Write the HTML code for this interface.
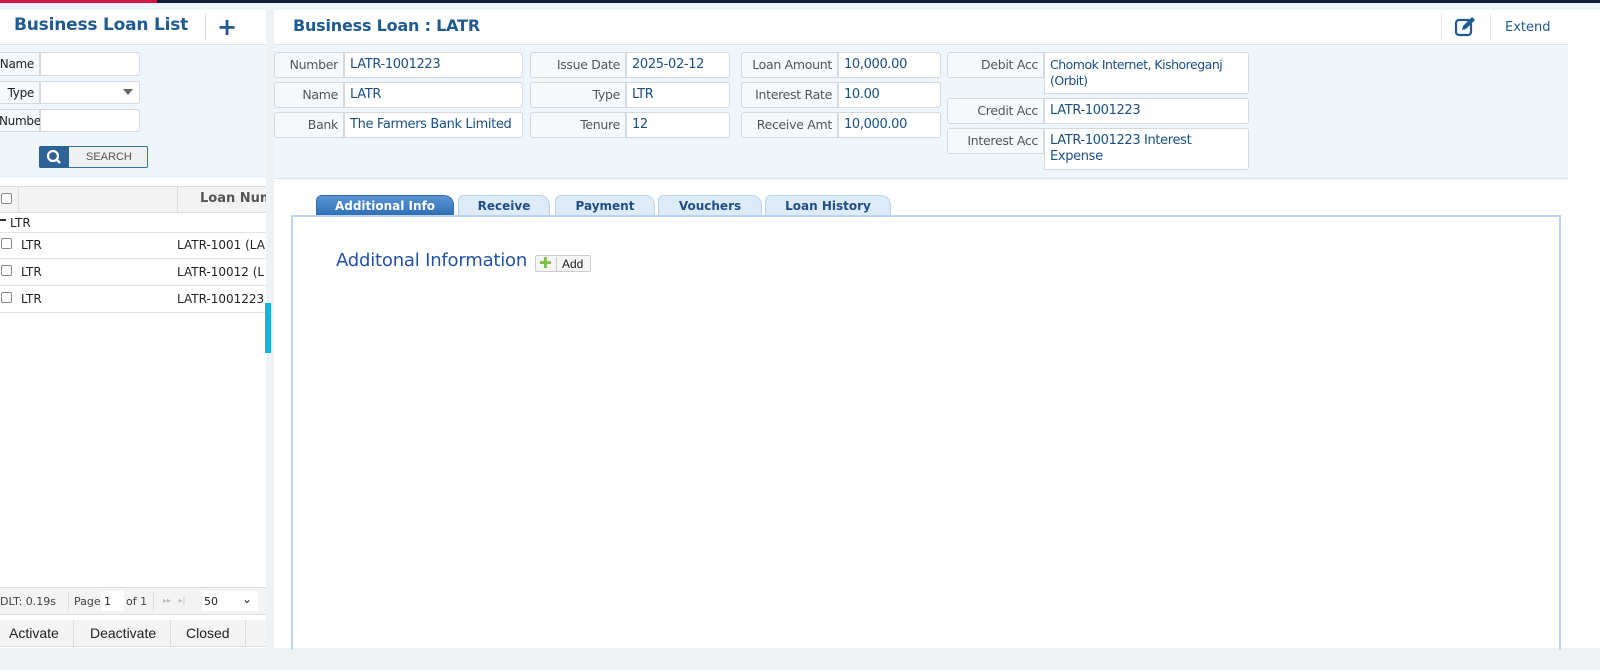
<!DOCTYPE html>
<html><head><meta charset="utf-8"><style>
*{box-sizing:border-box;margin:0;padding:0}
body{width:1600px;height:670px;overflow:hidden;background:#fff;font-family:"DejaVu Sans","Liberation Sans",sans-serif;font-size:13px;position:relative;color:#222}
.a{position:absolute}
.lbl{position:absolute;background:#f6f9fc;border:1px solid #d3d9df;border-radius:3px 0 0 3px;text-align:right;padding:4px 5px 0 0;color:#555;font-size:12.5px;letter-spacing:-0.3px}
.val{position:absolute;background:#fff;border:1px solid #d3d9df;border-radius:0 3px 3px 0;padding:4px 5px 0;color:#1a4f86;font-size:13px;line-height:16px;letter-spacing:-0.35px}
.tab{position:absolute;top:195px;height:21px;border:1px solid #b9d3ea;border-bottom:none;border-radius:6px 10px 0 0;background:#dcebf7;color:#1f4f86;font-weight:bold;font-size:12px;text-align:center;line-height:21px}
.row{position:absolute;left:0;width:266px;height:27px;border-bottom:1px solid #e2e2e2;font-size:12px;line-height:26px}
.cb{position:absolute;left:1px;top:6px;width:11px;height:11px;border:1px solid #888;border-radius:2px;background:#fff}
</style></head><body>
<div class="a" style="left:0;top:0;width:157px;height:3px;background:#d6163f"></div>
<div class="a" style="left:157px;top:0;width:1443px;height:3px;background:#0e1e3a"></div>
<div class="a" style="left:0;top:3px;width:1600px;height:7px;background:#eef5f8"></div>
<div class="a" style="left:0;top:648px;width:1600px;height:22px;background:#eef2f3"></div>
<!-- left panel -->
<div class="a" style="left:0;top:10px;width:266px;height:35px;background:#fff;border-bottom:1px solid #dde3e8"></div>
<div class="a" style="left:14px;top:15px;font-size:17px;font-weight:bold;color:#1f5a90;letter-spacing:-0.2px">Business Loan List</div>
<div class="a" style="left:205px;top:13px;width:1px;height:27px;background:#ddd"></div>
<div class="a" style="left:217px;top:18px;font-size:24px;font-weight:bold;color:#1f5a90;line-height:18px">+</div>
<div class="a" style="left:0;top:45px;width:266px;height:133px;background:#eef6fc"></div>
<div class="lbl" style="left:-2px;top:52px;width:42px;height:24px;font-size:12px;color:#222">Name</div><div class="val" style="left:40px;top:52px;width:100px;height:24px"></div>
<div class="lbl" style="left:-2px;top:81px;width:42px;height:23px;font-size:12px;color:#222">Type</div><div class="val" style="left:40px;top:81px;width:100px;height:23px"><span style="position:absolute;right:6px;top:7px;border:5px solid transparent;border-top:6px solid #666"></span></div>
<div class="lbl" style="left:-2px;top:109px;width:42px;height:23px;font-size:12px;color:#222;padding-right:0">Numbe</div><div class="val" style="left:40px;top:109px;width:100px;height:23px"></div>
<div class="a" style="left:39px;top:146px;width:109px;height:22px;border:1px solid #3a6fa5;border-radius:2px;background:#eef0f2"></div>
<div class="a" style="left:39px;top:146px;width:30px;height:22px;background:#2d6296;border-radius:2px 0 0 2px"><svg width="30" height="22"><circle cx="14" cy="10" r="5" fill="none" stroke="#fff" stroke-width="2.2"/><line x1="18" y1="14" x2="21" y2="17" stroke="#fff" stroke-width="2.5"/></svg></div>
<div class="a" style="left:86px;top:151px;font-size:11px;color:#555;font-family:'Liberation Sans'">SEARCH</div>
<div class="a" style="left:0;top:186px;width:266px;height:27px;background:#f3f3f3;border-top:1px solid #ddd;border-bottom:1px solid #ddd"></div>
<div class="cb" style="top:193px"></div>
<div class="a" style="left:18px;top:186px;width:1px;height:27px;background:#ddd"></div>
<div class="a" style="left:177px;top:186px;width:1px;height:27px;background:#ddd"></div>
<div class="a" style="left:200px;top:191px;font-weight:bold;color:#555;font-size:13px">Loan Num</div>
<div class="row" style="top:213px;height:20px;line-height:20px;padding-left:10px"><span class="a" style="left:0;top:6px;width:6px;height:2px;background:#333"></span>LTR</div>
<div class="row" style="top:232px"><span class="cb"></span><span class="a" style="left:21px">LTR</span><span class="a" style="left:177px">LATR-1001 (LA</span></div>
<div class="row" style="top:259px"><span class="cb"></span><span class="a" style="left:21px">LTR</span><span class="a" style="left:177px">LATR-10012 (L</span></div>
<div class="row" style="top:286px"><span class="cb"></span><span class="a" style="left:21px">LTR</span><span class="a" style="left:177px">LATR-1001223</span></div>
<div class="a" style="left:266px;top:10px;width:8px;height:638px;background:#eef2f5"></div>
<div class="a" style="left:265px;top:303px;width:6px;height:50px;background:#17b3d8"></div>
<div class="a" style="left:0;top:587px;width:266px;height:28px;background:#f3f3f3;border-top:1px solid #ddd;border-bottom:1px solid #ddd;font-size:11px;color:#444"></div>
<div class="a" style="left:0;top:595px;font-size:11px;color:#444">DLT: 0.19s</div>
<div class="a" style="left:68px;top:591px;width:1px;height:20px;background:#ddd"></div>
<div class="a" style="left:74px;top:595px;font-size:11px;color:#444">Page</div>
<div class="a" style="left:102px;top:591px;width:22px;height:20px;background:#fff;font-size:11px;padding:4px 0 0 2px">1</div>
<div class="a" style="left:126px;top:595px;font-size:11px;color:#444">of 1</div>
<div class="a" style="left:153px;top:591px;width:1px;height:20px;background:#ddd"></div>
<div class="a" style="left:163px;top:596px;font-size:8px;color:#bbb">▸▸ &nbsp; ▸|</div>
<div class="a" style="left:202px;top:591px;width:56px;height:20px;background:#fff;font-size:11px;padding:4px 0 0 2px">50<span style="position:absolute;right:6px;top:1px;font-size:12px">⌄</span></div>
<div class="a" style="left:0;top:620px;width:266px;height:27px;background:#f4f4f4;border-bottom:1px solid #ddd;font-family:'Liberation Sans';font-size:14px;line-height:27px">
<span class="a" style="left:9px">Activate</span><span class="a" style="left:73px;width:1px;height:27px;background:#ddd"></span>
<span class="a" style="left:90px">Deactivate</span><span class="a" style="left:170px;width:1px;height:27px;background:#ddd"></span>
<span class="a" style="left:186px">Closed</span><span class="a" style="left:245px;width:1px;height:27px;background:#ddd"></span></div>
<!-- right panel -->
<div class="a" style="left:274px;top:10px;width:1294px;height:35px;background:#fff;border-bottom:1px solid #dde3e8"></div>
<div class="a" style="left:293px;top:16px;font-size:16px;font-weight:bold;color:#1f5a90;letter-spacing:-0.2px">Business Loan : LATR</div>
<div class="a" style="left:1441px;top:14px;width:1px;height:26px;background:#e2e2e2"></div>
<div class="a" style="left:1490px;top:14px;width:1px;height:26px;background:#e2e2e2"></div>
<svg class="a" style="left:1454px;top:16px" width="24" height="22"><rect x="2" y="4" width="15" height="15" rx="3" fill="none" stroke="#1f5a90" stroke-width="2.2"/><path d="M8 14 L9 10 L18 1 L21 4 L12 13 Z" fill="#1f5a90"/></svg>
<div class="a" style="left:1505px;top:20px;font-size:13px;color:#1f5a90">Extend</div>
<div class="a" style="left:274px;top:45px;width:1294px;height:134px;background:#eef6fc;border-bottom:1px solid #dde3e8"></div>
<div class="lbl" style="left:274px;top:52px;width:70px;height:26px">Number</div><div class="val" style="left:344px;top:52px;width:179px;height:26px">LATR-1001223</div>
<div class="lbl" style="left:274px;top:82px;width:70px;height:26px">Name</div><div class="val" style="left:344px;top:82px;width:179px;height:26px">LATR</div>
<div class="lbl" style="left:274px;top:112px;width:70px;height:26px">Bank</div><div class="val" style="left:344px;top:112px;width:179px;height:26px">The Farmers Bank Limited</div>
<div class="lbl" style="left:530px;top:52px;width:96px;height:26px">Issue Date</div><div class="val" style="left:626px;top:52px;width:104px;height:26px">2025-02-12</div>
<div class="lbl" style="left:530px;top:82px;width:96px;height:26px">Type</div><div class="val" style="left:626px;top:82px;width:104px;height:26px">LTR</div>
<div class="lbl" style="left:530px;top:112px;width:96px;height:26px">Tenure</div><div class="val" style="left:626px;top:112px;width:104px;height:26px">12</div>
<div class="lbl" style="left:741px;top:52px;width:97px;height:26px">Loan Amount</div><div class="val" style="left:838px;top:52px;width:103px;height:26px">10,000.00</div>
<div class="lbl" style="left:741px;top:82px;width:97px;height:26px">Interest Rate</div><div class="val" style="left:838px;top:82px;width:103px;height:26px">10.00</div>
<div class="lbl" style="left:741px;top:112px;width:97px;height:26px">Receive Amt</div><div class="val" style="left:838px;top:112px;width:103px;height:26px">10,000.00</div>
<div class="lbl" style="left:947px;top:52px;width:97px;height:26px">Debit Acc</div><div class="val" style="left:1044px;top:52px;width:205px;height:42px;font-size:12.5px;letter-spacing:-0.5px">Chomok Internet, Kishoreganj (Orbit)</div>
<div class="lbl" style="left:947px;top:98px;width:97px;height:26px">Credit Acc</div><div class="val" style="left:1044px;top:98px;width:205px;height:26px">LATR-1001223</div>
<div class="lbl" style="left:947px;top:128px;width:97px;height:26px">Interest Acc</div><div class="val" style="left:1044px;top:128px;width:205px;height:42px">LATR-1001223 Interest Expense</div>
<div class="tab" style="left:316px;width:138px;background:linear-gradient(#5a95d2,#2f6db4);color:#fff;border-color:#2f6db4">Additional Info</div>
<div class="tab" style="left:458px;width:92px">Receive</div>
<div class="tab" style="left:555px;width:100px">Payment</div>
<div class="tab" style="left:658px;width:104px">Vouchers</div>
<div class="tab" style="left:765px;width:126px">Loan History</div>
<div class="a" style="left:291px;top:215px;width:1270px;height:435px;border:2px solid #b8d6f3;border-bottom:none"></div>
<div class="a" style="left:336px;top:250px;font-size:18px;color:#2252a8;letter-spacing:-0.2px">Additonal Information</div>
<div class="a" style="left:535px;top:255px;width:56px;height:17px;border:1px solid #ccc;border-radius:2px;background:#f5f5f5;font-size:12px;line-height:15px"><span style="position:absolute;left:3px;top:0;color:#7cc144;font-weight:bold;font-size:15px">✚</span><span style="position:absolute;left:20px;top:1px;width:1px;height:14px;background:#ccc"></span><span style="position:absolute;left:26px;top:1px;font-family:'Liberation Sans'">Add</span></div>
</body></html>
